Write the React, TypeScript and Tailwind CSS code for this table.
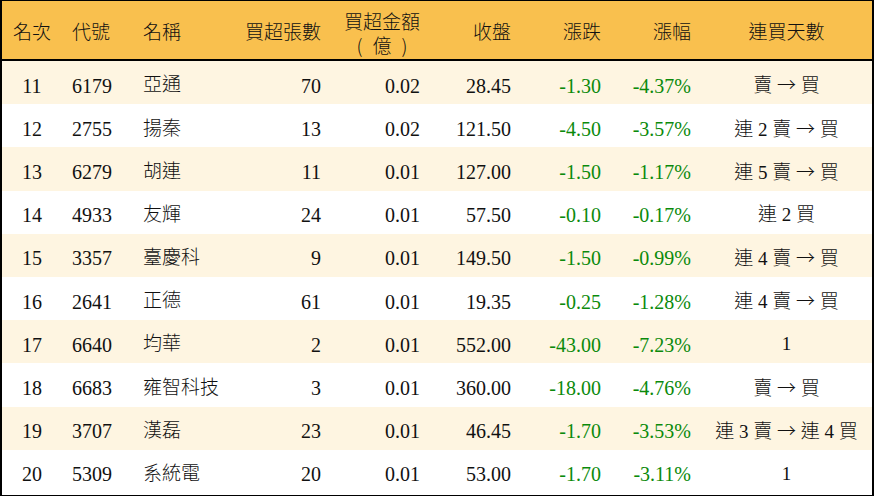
const rows = [
  { rank: 11, code: "6179", name: "亞通", lots: "70", amount: "0.02", close: "28.45", chg: "-1.30", pct: "-4.37%", streak: "賣 → 買" },
  { rank: 12, code: "2755", name: "揚秦", lots: "13", amount: "0.02", close: "121.50", chg: "-4.50", pct: "-3.57%", streak: "連 2 賣 → 買" },
  { rank: 13, code: "6279", name: "胡連", lots: "11", amount: "0.01", close: "127.00", chg: "-1.50", pct: "-1.17%", streak: "連 5 賣 → 買" },
  { rank: 14, code: "4933", name: "友輝", lots: "24", amount: "0.01", close: "57.50", chg: "-0.10", pct: "-0.17%", streak: "連 2 買" },
  { rank: 15, code: "3357", name: "臺慶科", lots: "9", amount: "0.01", close: "149.50", chg: "-1.50", pct: "-0.99%", streak: "連 4 賣 → 買" },
  { rank: 16, code: "2641", name: "正德", lots: "61", amount: "0.01", close: "19.35", chg: "-0.25", pct: "-1.28%", streak: "連 4 賣 → 買" },
  { rank: 17, code: "6640", name: "均華", lots: "2", amount: "0.01", close: "552.00", chg: "-43.00", pct: "-7.23%", streak: "1" },
  { rank: 18, code: "6683", name: "雍智科技", lots: "3", amount: "0.01", close: "360.00", chg: "-18.00", pct: "-4.76%", streak: "賣 → 買" },
  { rank: 19, code: "3707", name: "漢磊", lots: "23", amount: "0.01", close: "46.45", chg: "-1.70", pct: "-3.53%", streak: "連 3 賣 → 連 4 買" },
  { rank: 20, code: "5309", name: "系統電", lots: "20", amount: "0.01", close: "53.00", chg: "-1.70", pct: "-3.11%", streak: "1" },
];

const grid = "grid grid-cols-[60px_70px_100px_99px_99px_91px_90px_90px_171px] items-center";

// split the streak text so the arrow can use the CJK font (wide arrow like the reference)
function Streak({ text }: { text: string }) {
  const parts = text.split("→");
  return (
    <>
      {parts.map((p, i) => (
        <span key={i}>
          {i > 0 ? <span className="font-['Noto_Sans_CJK_TC'] font-light">→</span> : null}
          {p}
        </span>
      ))}
    </>
  );
}

export default function App() {
  return (
    <div className="w-[874px] h-[496px] bg-white font-['Liberation_Serif','Noto_Sans_CJK_TC',serif] text-[20px] text-[#111]">
      <div className="h-full border-x-2 border-y border-black overflow-hidden">
        <div className={`${grid} h-[60px] pt-[6px] bg-[#f9c04e] border-b-2 border-black text-[19px] leading-[22px] font-light`}>
          <div className="text-center">名次</div>
          <div className="pl-[10px]">代號</div>
          <div className="pl-[11px]">名稱</div>
          <div className="text-right pr-[10px]">買超張數</div>
          <div className="flex justify-end pr-[10px] mt-[1px]">
            <div className="flex flex-col items-center">
              <span>買超金額</span>
              <span className="flex gap-[10px] font-['Noto_Sans_CJK_TC']">
                <span>(</span>
                <span>億</span>
                <span>)</span>
              </span>
            </div>
          </div>
          <div className="text-right pr-[10px]">收盤</div>
          <div className="text-right pr-[10px]">漲跌</div>
          <div className="text-right pr-[10px]">漲幅</div>
          <div className="text-center">連買天數</div>
        </div>
        {rows.map((r, i) => (
          <div key={r.rank} className={`${grid} h-[43.2px] pt-[6px] ${i % 2 === 0 ? "bg-[#fef5e1]" : "bg-white"}`}>
            <div className="text-center">{r.rank}</div>
            <div className="pl-[10px]">{r.code}</div>
            <div className="pl-[11px] text-[19px] font-light">{r.name}</div>
            <div className="text-right pr-[10px]">{r.lots}</div>
            <div className="text-right pr-[10px]">{r.amount}</div>
            <div className="text-right pr-[10px]">{r.close}</div>
            <div className="text-right pr-[10px] text-[#0b8a0b]">{r.chg}</div>
            <div className="text-right pr-[10px] text-[#0b8a0b]">{r.pct}</div>
            <div className="text-center text-[19px] font-light whitespace-pre">
              <Streak text={r.streak} />
            </div>
          </div>
        ))}
      </div>
    </div>
  );
}
